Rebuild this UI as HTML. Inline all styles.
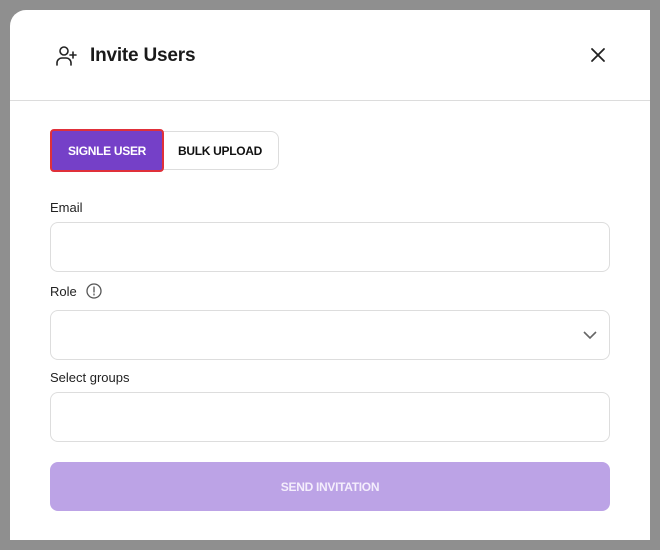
<!DOCTYPE html>
<html><head><style>
*{box-sizing:border-box;margin:0;padding:0}
body{width:660px;height:550px;background:#8f8f8f;font-family:"Liberation Sans",sans-serif;position:relative;overflow:hidden}
.m{position:absolute;left:10px;top:10px;width:640px;height:530px;background:#fff;border-radius:16px 0 0 0}
.t{position:absolute;left:80px;top:35px;font-size:19px;font-weight:bold;color:#1a1a1a;letter-spacing:-0.2px}
.hr{position:absolute;left:0;right:0;top:90px;height:1px;background:#dcdcdc}
.tab1{position:absolute;left:40px;top:119px;width:114px;height:43px;background:#7540c8;border:2px solid #e0303a;border-radius:4px;color:#fff;font-size:12px;font-weight:bold;display:flex;align-items:center;justify-content:center;letter-spacing:-0.3px}
.tab2{position:absolute;left:152px;top:121px;width:117px;height:39px;border:1px solid #ddd;border-left:none;border-radius:0 8px 8px 0;color:#111;font-size:12px;font-weight:bold;display:flex;align-items:center;justify-content:center;letter-spacing:-0.3px}
.l{position:absolute;left:40px;font-size:13px;color:#222}
.i{position:absolute;left:40px;width:560px;height:50px;border:1px solid #ddd;border-radius:8px}
.b{position:absolute;left:40px;top:452px;width:560px;height:49px;background:#bca3e6;border-radius:8px;color:#f4eefc;font-size:12px;font-weight:bold;display:flex;align-items:center;justify-content:center;letter-spacing:-0.3px}
</style></head><body>
<div class="m">
<svg style="position:absolute;left:44px;top:34px" width="24" height="24" viewBox="0 0 24 24" fill="none" stroke="#222" stroke-width="1.6" stroke-linecap="round"><circle cx="10" cy="7" r="4"/><path d="M3 21v-2a5 5 0 0 1 5-5h4a5 5 0 0 1 5 5v2"/><path d="M19 8v6M16 11h6"/></svg>
<div class="t">Invite Users</div>
<svg style="position:absolute;left:580px;top:37px" width="16" height="16" viewBox="0 0 16 16" stroke="#222" stroke-width="1.8" stroke-linecap="round"><path d="M2 2l12 12M14 2L2 14"/></svg>
<div class="hr"></div>
<div class="tab2">BULK UPLOAD</div>
<div class="tab1">SIGNLE USER</div>
<div class="l" style="top:190px">Email</div>
<div class="i" style="top:212px"></div>
<div class="l" style="top:274px">Role</div>
<svg style="position:absolute;left:76px;top:273px" width="16" height="16" viewBox="0 0 16 16" fill="none" stroke="#555" stroke-width="1.3"><circle cx="8" cy="8" r="7"/><path d="M8 4v5M8 11v1" stroke-linecap="round"/></svg>
<div class="i" style="top:300px"></div>
<svg style="position:absolute;left:573px;top:320px" width="14" height="10" viewBox="0 0 14 10" fill="none" stroke="#666" stroke-width="1.6"><path d="M1 2l6 6 6-6"/></svg>
<div class="l" style="top:360px">Select groups</div>
<div class="i" style="top:382px"></div>
<div class="b">SEND INVITATION</div>
</div>
</body></html>
